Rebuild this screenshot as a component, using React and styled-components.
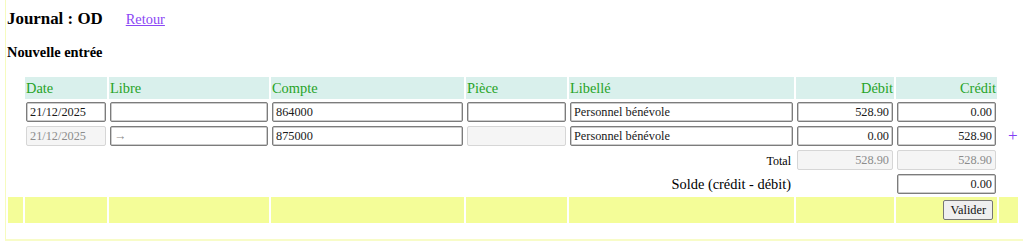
import React from "react";
import styled, { createGlobalStyle } from "styled-components";

const GlobalStyle = createGlobalStyle`
  html, body {
    margin: 0;
    padding: 0;
    background: #ffffff;
  }
  body {
    font-family: "Liberation Serif", "Times New Roman", serif;
    font-size: 14.4px;
    color: #000;
  }
`;

const Page = styled.div`
  margin-left: 5px;
  width: 1018px;
  height: 241px;
  box-sizing: border-box;
  border-left: 1px solid #f6fbbf;
  border-bottom: 2px solid #f8fcc8;
  padding: 9px 0 0 1px;
`;

const TitleBar = styled.div`
  display: flex;
  align-items: baseline;
  gap: 23px;
  height: 20px;
`;

const Title = styled.h3`
  margin: 0;
  font-size: 16.9px;
  font-weight: bold;
`;

const BackLink = styled.a`
  color: #8b47f5;
  font-size: 14.4px;
  text-decoration: underline;
  cursor: pointer;
`;

const SubTitle = styled.h4`
  margin: 15px 0 0 0;
  font-size: 14.4px;
  font-weight: bold;
  line-height: 17px;
`;

const Grid = styled.table`
  margin: 14px 0 0 -1px;
  border-collapse: separate;
  border-spacing: 2px;
  table-layout: fixed;
  width: 1014px;
`;

const HeadCell = styled.th`
  background: ${(p) => (p.$blank ? "transparent" : "#d9f0ec")};
  color: #26a326;
  font-weight: normal;
  font-size: 14.4px;
  height: 22px;
  padding: 0 1px;
  text-align: ${(p) => (p.$right ? "right" : "left")};
  vertical-align: middle;
`;

const Cell = styled.td`
  height: ${(p) => (p.$yellow ? "26px" : "22px")};
  padding: 0 ${(p) => (p.$label ? "3px" : "1px")} 0 1px;
  vertical-align: middle;
  text-align: ${(p) => (p.$right ? "right" : "left")};
  background: ${(p) => (p.$yellow ? "#f4fd98" : "transparent")};
`;

const Field = styled.input`
  display: block;
  box-sizing: border-box;
  width: 100%;
  height: 20px;
  margin: 0;
  padding: 1px 3px;
  font-family: "Liberation Serif", "Times New Roman", serif;
  font-size: 12.3px;
  color: #1a1a1a;
  background: #ffffff;
  border: 1px solid #7c7c7c;
  box-shadow: inset 0 0 0 0.5px #9a9a9a;
  border-radius: 2px;
  text-align: ${(p) => (p.$right ? "right" : "left")};

  &::placeholder {
    color: #8a8a8a;
  }

  &:disabled {
    background: #f5f5f5;
    color: #8c8c8c;
    border-color: #d6d6d6;
    box-shadow: none;
  }
`;

const TotalLabel = styled.span`
  font-size: 12px;
`;

const SoldeLabel = styled.span`
  font-size: 14.4px;
`;

const AddLink = styled.a`
  color: #8140f4;
  font-size: 17px;
  cursor: pointer;
  padding-left: 8px;
`;

const SubmitButton = styled.button`
  font-family: "Liberation Serif", "Times New Roman", serif;
  font-size: 12.3px;
  color: #111;
  background: #efefef;
  border: 1px solid #767676;
  border-radius: 2px;
  padding: 1px 6px;
  height: 20px;
  margin-right: 3px;
`;

const widths = [15, 82, 160, 193, 101, 225, 98, 101, 19];

const lines = [
  { date: "21/12/2025", compte: "864000", libelle: "Personnel bénévole", debit: "528.90", credit: "0.00", first: true },
  { date: "21/12/2025", compte: "875000", libelle: "Personnel bénévole", debit: "0.00", credit: "528.90", first: false },
];

const EntryRow = ({ line }) => (
  <tr>
    <Cell />
    <Cell>
      <Field defaultValue={line.date} disabled={!line.first} />
    </Cell>
    <Cell>
      <Field defaultValue="" placeholder={line.first ? "" : "→"} />
    </Cell>
    <Cell>
      <Field defaultValue={line.compte} />
    </Cell>
    <Cell>
      <Field defaultValue="" disabled={!line.first} />
    </Cell>
    <Cell>
      <Field defaultValue={line.libelle} />
    </Cell>
    <Cell>
      <Field $right defaultValue={line.debit} />
    </Cell>
    <Cell>
      <Field $right defaultValue={line.credit} />
    </Cell>
    <Cell>{!line.first && <AddLink>+</AddLink>}</Cell>
  </tr>
);

const App = () => (
  <>
    <GlobalStyle />
    <Page>
      <TitleBar>
        <Title>Journal : OD</Title>
        <BackLink>Retour</BackLink>
      </TitleBar>
      <SubTitle>Nouvelle entrée</SubTitle>
      <Grid>
        <colgroup>
          {widths.map((w, i) => (
            <col key={i} style={{ width: w }} />
          ))}
        </colgroup>
        <thead>
          <tr>
            <HeadCell $blank />
            <HeadCell>Date</HeadCell>
            <HeadCell>Libre</HeadCell>
            <HeadCell>Compte</HeadCell>
            <HeadCell>Pièce</HeadCell>
            <HeadCell>Libellé</HeadCell>
            <HeadCell $right>Débit</HeadCell>
            <HeadCell $right>Crédit</HeadCell>
            <HeadCell $blank />
          </tr>
        </thead>
        <tbody>
          {lines.map((line, i) => (
            <EntryRow key={i} line={line} />
          ))}
          <tr>
            <Cell colSpan={6} $right $label>
              <TotalLabel>Total</TotalLabel>
            </Cell>
            <Cell>
              <Field $right defaultValue="528.90" disabled />
            </Cell>
            <Cell>
              <Field $right defaultValue="528.90" disabled />
            </Cell>
            <Cell />
          </tr>
          <tr>
            <Cell colSpan={6} $right $label>
              <SoldeLabel>Solde (crédit - débit)</SoldeLabel>
            </Cell>
            <Cell />
            <Cell>
              <Field $right defaultValue="0.00" />
            </Cell>
            <Cell />
          </tr>
          <tr>
            {widths.map((_, i) => (
              <Cell key={i} $yellow $right>
                {i === 7 && <SubmitButton>Valider</SubmitButton>}
              </Cell>
            ))}
          </tr>
        </tbody>
      </Grid>
    </Page>
  </>
);

export default App;
